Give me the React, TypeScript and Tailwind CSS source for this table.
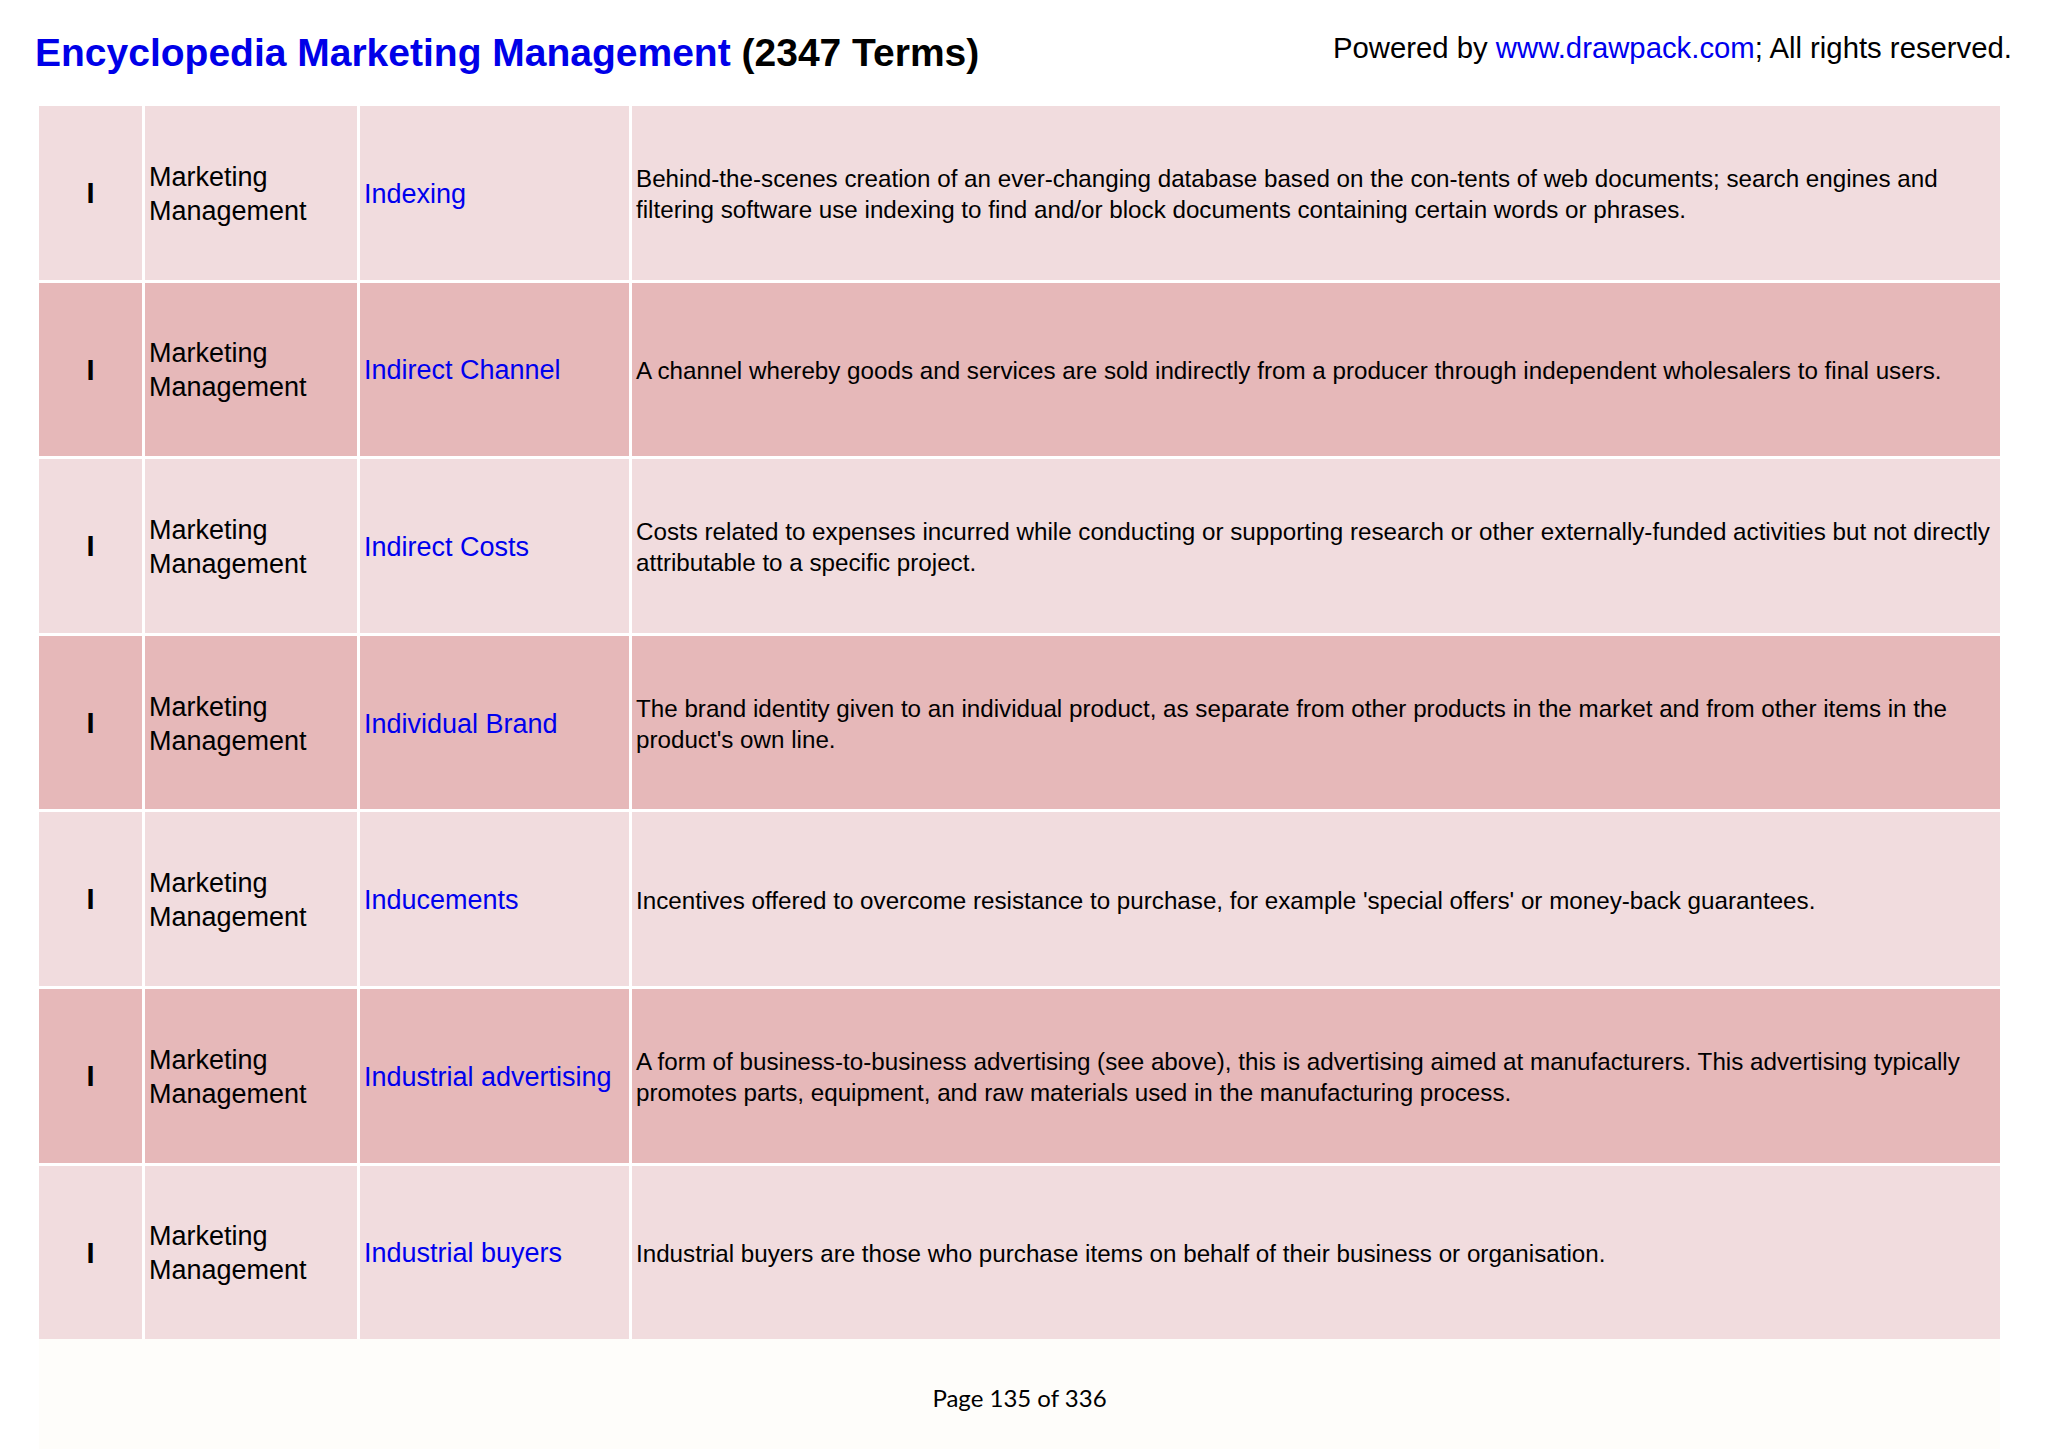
import React from "react";

type Row = { term: string; desc: string; dark: boolean };

const rows: Row[] = [
  {
    term: "Indexing",
    desc: "Behind-the-scenes creation of an ever-changing database based on the con-tents of web documents; search engines and filtering software use indexing to find and/or block documents containing certain words or phrases.",
    dark: false,
  },
  {
    term: "Indirect Channel",
    desc: "A channel whereby goods and services are sold indirectly from a producer through independent wholesalers to final users.",
    dark: true,
  },
  {
    term: "Indirect Costs",
    desc: "Costs related to expenses incurred while conducting or supporting research or other externally-funded activities but not directly attributable to a specific project.",
    dark: false,
  },
  {
    term: "Individual Brand",
    desc: "The brand identity given to an individual product, as separate from other products in the market and from other items in the product's own line.",
    dark: true,
  },
  {
    term: "Inducements",
    desc: "Incentives offered to overcome resistance to purchase, for example 'special offers' or money-back guarantees.",
    dark: false,
  },
  {
    term: "Industrial advertising",
    desc: "A form of business-to-business advertising (see above), this is advertising aimed at manufacturers. This advertising typically promotes parts, equipment, and raw materials used in the manufacturing process.",
    dark: true,
  },
  {
    term: "Industrial buyers",
    desc: "Industrial buyers are those who purchase items on behalf of their business or organisation.",
    dark: false,
  },
];

export default function App() {
  return (
    <div className="w-[2048px] h-[1449px] bg-white font-['Liberation_Sans',Arial,sans-serif] text-black flex flex-col">
      <div className="h-[106px] shrink-0 flex justify-between items-start pt-[31px] pl-[35px] pr-[36px]">
        <div className="text-[39px] leading-[44px] font-bold whitespace-nowrap">
          <span className="text-[#0000e8]">Encyclopedia Marketing Management</span>{" "}
          <span>(2347 Terms)</span>
        </div>
        <div className="text-[29.3px] leading-[34px] whitespace-nowrap">
          Powered by <span className="text-[#0000ee]">www.drawpack.com</span>; All rights reserved.
        </div>
      </div>
      <div className="mx-[39px] w-[1961px] flex flex-col gap-y-[3px]">
        {rows.map((r, i) => {
          const bg = r.dark ? "bg-[#e6b8b9]" : "bg-[#f1dcde]";
          return (
            <div key={i} className="grid grid-cols-[103px_212px_269px_1fr] gap-x-[3px] h-[173.6px]">
              <div className={`${bg} flex items-center justify-center text-[29px] font-bold pt-[2px]`}>I</div>
              <div className={`${bg} flex items-center pl-[4px] pt-[2px] text-[27px] leading-[34px]`}>
                <div>
                  Marketing
                  <br />
                  Management
                </div>
              </div>
              <div className={`${bg} flex items-center pl-[4px] pt-[2px] text-[27px] leading-[34px] text-[#0000ee] whitespace-nowrap`}>
                {r.term}
              </div>
              <div className={`${bg} flex items-center pl-[4px] pr-[3px] pt-[2px] text-[24.2px] leading-[31px]`}>
                <div>{r.desc}</div>
              </div>
            </div>
          );
        })}
      </div>
      <div className="mx-[39px] w-[1961px] flex-1 bg-[#fefdfa] flex items-start justify-center pt-[44px]">
        <span className="font-['Lato',sans-serif] text-[24px] leading-[30px] text-black">Page 135 of 336</span>
      </div>
    </div>
  );
}
